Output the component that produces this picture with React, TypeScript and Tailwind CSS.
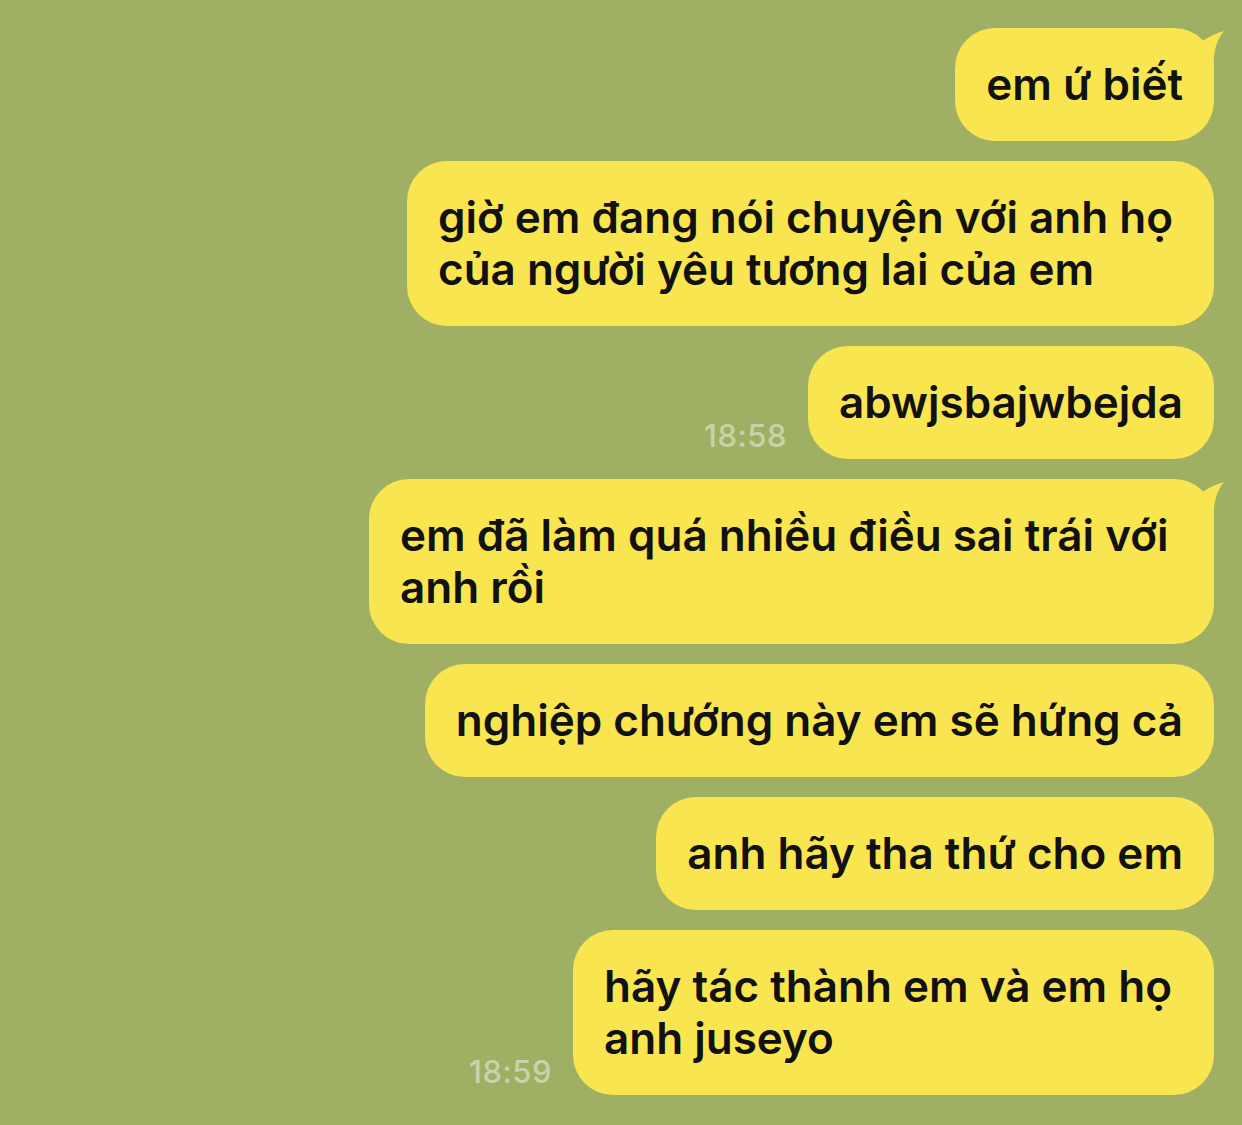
import React from "react";

const font = { fontFamily: "Inter, 'Noto Sans', sans-serif" };

function Tail() {
  return (
    <svg
      className="absolute top-0 right-[-12px]"
      width="36"
      height="40"
      viewBox="0 0 36 40"
    >
      <path d="M34 3 Q22 6 8 16 L8 40 L24 40 Q23 28 26 18 Q29 9 34 3 Z" fill="#f9e550" />
    </svg>
  );
}

function Bubble({
  children,
  tail,
  time,
  width,
}: {
  children: React.ReactNode;
  tail?: boolean;
  time?: string;
  width?: string;
}) {
  return (
    <div className="flex items-end justify-end gap-[21px]">
      {time && (
        <div className="text-[31px] leading-[36px] mb-[5px] text-[#c9d3a8] font-medium tracking-[0.5px]">
          {time}
        </div>
      )}
      <div
        className={`relative bg-[#f9e550] rounded-[40px] px-[31px] pt-[30px] pb-[31px] text-[44px] leading-[52px] font-semibold text-[#111] whitespace-nowrap ${width ?? ""}`}
      >
        {tail && <Tail />}
        <span className="relative">{children}</span>
      </div>
    </div>
  );
}

export default function App() {
  return (
    <div className="w-[1242px] h-[1125px] bg-[#9fb064] overflow-hidden" style={font}>
      <div className="flex flex-col gap-[20px] pt-[28px] pr-[28px] items-stretch">
        <Bubble tail>em ứ biết</Bubble>
        <Bubble width="w-[807px]">
          giờ em đang nói chuyện với anh họ
          <br />
          của người yêu tương lai của em
        </Bubble>
        <Bubble time="18:58">abwjsbajwbejda</Bubble>
        <Bubble tail width="w-[845px]">
          em đã làm quá nhiều điều sai trái với
          <br />
          anh rồi
        </Bubble>
        <Bubble>nghiệp chướng này em sẽ hứng cả</Bubble>
        <Bubble>anh hãy tha thứ cho em</Bubble>
        <Bubble time="18:59" width="w-[641px]">
          hãy tác thành em và em họ
          <br />
          anh juseyo
        </Bubble>
      </div>
    </div>
  );
}
